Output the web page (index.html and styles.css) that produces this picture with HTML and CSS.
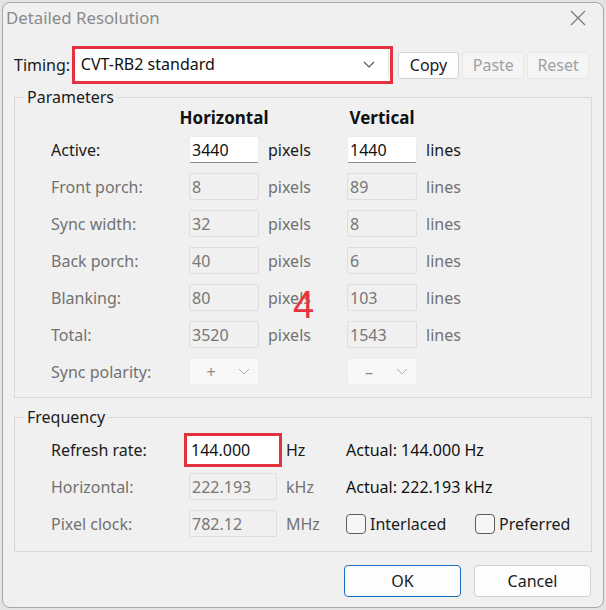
FILE: index.html
```html
<!DOCTYPE html>
<html lang="en">
<head>
  <meta charset="UTF-8">
  <title>Detailed Resolution</title>
  <link rel="stylesheet" href="styles.css">
</head>
<body>
  <div id="dialog">
    <div id="title-bar">
      <span id="title-text">Detailed Resolution</span>
      <svg id="close-btn" width="16" height="16" viewBox="0 0 16 16">
        <path d="M1 1L15 15M15 1L1 15" stroke="#7a7a7a" stroke-width="1.2" fill="none"/>
      </svg>
    </div>

    <div id="dialog-body">
      <div id="timing-row">
        <label class="row-label">Timing:</label>
        <div class="highlight timing-highlight">
          <div id="timing-combo">
            <span>CVT-RB2 standard</span>
            <svg class="chevron" width="12" height="7" viewBox="0 0 12 7">
              <path d="M1 1L6 6L11 1" stroke="#555" stroke-width="1.1" fill="none"/>
            </svg>
          </div>
        </div>
        <button class="push-btn">Copy</button>
        <button class="push-btn" disabled>Paste</button>
        <button class="push-btn" disabled>Reset</button>
      </div>

      <fieldset class="group-box">
        <legend>Parameters</legend>
        <div class="param-grid">
          <span></span><span class="col-head">Horizontal</span><span></span><span class="col-head">Vertical</span><span></span>

          <span class="field-label">Active:</span>
          <input class="text-box" value="3440">
          <span class="unit">pixels</span>
          <input class="text-box" value="1440">
          <span class="unit">lines</span>

          <span class="field-label off">Front porch:</span>
          <input class="text-box" value="8" disabled>
          <span class="unit off">pixels</span>
          <input class="text-box" value="89" disabled>
          <span class="unit off">lines</span>

          <span class="field-label off">Sync width:</span>
          <input class="text-box" value="32" disabled>
          <span class="unit off">pixels</span>
          <input class="text-box" value="8" disabled>
          <span class="unit off">lines</span>

          <span class="field-label off">Back porch:</span>
          <input class="text-box" value="40" disabled>
          <span class="unit off">pixels</span>
          <input class="text-box" value="6" disabled>
          <span class="unit off">lines</span>

          <span class="field-label off">Blanking:</span>
          <input class="text-box" value="80" disabled>
          <span class="unit off">pixels</span>
          <input class="text-box" value="103" disabled>
          <span class="unit off">lines</span>

          <span class="field-label off">Total:</span>
          <input class="text-box" value="3520" disabled>
          <span class="unit off">pixels</span>
          <input class="text-box" value="1543" disabled>
          <span class="unit off">lines</span>

          <span class="field-label off">Sync polarity:</span>
          <div class="mini-combo">
            <span class="sign">+</span>
            <svg class="chevron" width="12" height="7" viewBox="0 0 12 7">
              <path d="M1 1L6 6L11 1" stroke="#b0b0b0" stroke-width="1" fill="none"/>
            </svg>
          </div>
          <span></span>
          <div class="mini-combo">
            <span class="sign">&ndash;</span>
            <svg class="chevron" width="12" height="7" viewBox="0 0 12 7">
              <path d="M1 1L6 6L11 1" stroke="#b0b0b0" stroke-width="1" fill="none"/>
            </svg>
          </div>
          <span></span>
        </div>
        <span id="step-mark">4</span>
      </fieldset>

      <fieldset class="group-box freq-box">
        <legend>Frequency</legend>
        <div class="freq-grid">
          <span class="field-label">Refresh rate:</span>
          <div class="highlight rate-highlight">
            <input class="text-box wide" value="144.000">
          </div>
          <span class="unit">Hz</span>
          <span class="actual">Actual: 144.000 Hz</span>

          <span class="field-label off">Horizontal:</span>
          <input class="text-box wide" value="222.193" disabled>
          <span class="unit off">kHz</span>
          <span class="actual">Actual: 222.193 kHz</span>

          <span class="field-label off">Pixel clock:</span>
          <input class="text-box wide" value="782.12" disabled>
          <span class="unit off">MHz</span>
          <div class="check-row">
            <label class="check"><span class="check-box"></span>Interlaced</label>
            <label class="check"><span class="check-box"></span>Preferred</label>
          </div>
        </div>
      </fieldset>

      <div id="button-row">
        <button class="dlg-btn default-btn">OK</button>
        <button class="dlg-btn">Cancel</button>
      </div>
    </div>
  </div>
</body>
</html>
```

FILE: styles.css
```css
body {
  margin: 0;
  background-color: #e4e4e4;
  font-family: "Noto Sans", "Open Sans", sans-serif;
  font-size: 16px;
  color: #1b1b1b;
}

#dialog {
  position: relative;
  margin: 2px 0 0 2px;
  width: 600px;
  height: 604px;
  background-color: #f0f0f0;
  border: 1px solid #a8a8a8;
  border-radius: 8px;
  overflow: hidden;
}

#title-bar {
  height: 40px;
  display: flex;
  align-items: flex-start;
  justify-content: space-between;
  padding: 4px 17px 0 3px;
  box-sizing: border-box;
}

#title-text {
  font-size: 16.8px;
  line-height: 22px;
  color: #8a8a8a;
}

#close-btn {
  margin-top: 3px;
}

#dialog-body {
  padding: 4px 11px 0 11px;
}

#timing-row {
  display: flex;
  align-items: center;
  height: 36px;
}

.row-label {
  width: 58px;
}

.highlight {
  border: 3px solid #e5323f;
  background-color: #fff;
}

.timing-highlight {
  width: 314px;
  height: 30px;
  padding: 1px;
  margin-right: 5px;
}

#timing-combo {
  height: 28px;
  display: flex;
  align-items: center;
  justify-content: space-between;
  padding: 0 13px 0 5px;
  background-color: #fff;
  border-right: 1px solid #e6e6e6;
  color: #111;
}

.push-btn {
  width: 62px;
  height: 27px;
  margin-right: 3px;
  font-family: inherit;
  font-size: 16px;
  color: #1b1b1b;
  background-color: #fdfdfd;
  border: 1px solid #d4d4d4;
  border-radius: 3px;
  padding: 0;
}

.push-btn:disabled {
  color: #a0a0a0;
  background-color: #f5f5f5;
  border-color: #e8e8e8;
}

.group-box {
  position: relative;
  margin: 4px 0 0 0;
  padding: 0 0 7px 0;
  border: 1px solid #d8d8d8;
  border-radius: 0;
  min-width: 0;
}

.group-box legend {
  padding: 0 3px;
  margin-left: 9px;
  line-height: 20px;
  color: #1b1b1b;
}

.param-grid {
  display: grid;
  grid-template-columns: 138px 70px 88px 70px auto;
  grid-template-rows: 24px repeat(7, 37px);
  align-items: center;
  margin-left: 36px;
}

.col-head {
  align-self: start;
  justify-self: center;
  white-space: nowrap;
  font-weight: bold;
  font-size: 17px;
  line-height: 22px;
  color: #111;
}

.field-label {
  white-space: nowrap;
}

.off {
  color: #727272;
}

.unit {
  padding-left: 9px;
}

.text-box {
  box-sizing: border-box;
  width: 70px;
  height: 27px;
  padding: 0 0 0 2px;
  font-family: inherit;
  font-size: 16px;
  color: #111;
  background-color: #fff;
  border: 1px solid #ececec;
  border-bottom: 1px solid #8c8c8c;
  border-radius: 2px;
  outline: none;
}

.text-box:disabled {
  color: #777;
  background-color: #f0f0f0;
  border: 1px solid #dedede;
}

.text-box.wide {
  width: 88px;
}

.mini-combo {
  box-sizing: border-box;
  width: 70px;
  height: 27px;
  display: flex;
  align-items: center;
  justify-content: space-between;
  padding: 0 8px 0 14px;
  background-color: #f8f8f8;
  border: 1px solid #ededed;
  border-radius: 3px;
}

.sign {
  color: #8a8a8a;
  width: 14px;
  text-align: center;
}

#step-mark {
  position: absolute;
  left: 278px;
  top: 179px;
  font-family: "Liberation Sans", sans-serif;
  font-size: 38px;
  line-height: 1;
  color: #e8323e;
}

.freq-box {
  margin-top: 9px;
  padding-bottom: 9px;
}

.freq-grid {
  display: grid;
  grid-template-columns: 138px 88px 69px auto;
  grid-template-rows: 37px 37px 37px;
  align-items: center;
  margin: 4px 0 0 36px;
}

.rate-highlight {
  width: 92px;
  height: 28px;
  margin-left: -5px;
  padding: 0;
}

.rate-highlight .text-box {
  width: 92px;
  height: 28px;
  border: none;
  padding-left: 4px;
}

.actual {
  white-space: nowrap;
  color: #111;
}

.check-row {
  display: flex;
}

.check {
  display: flex;
  align-items: center;
  width: 129px;
  white-space: nowrap;
}

.check-box {
  box-sizing: border-box;
  width: 20px;
  height: 20px;
  margin-right: 4px;
  border: 1px solid #5c5c5c;
  border-radius: 4px;
  background-color: #f6f6f6;
}

#button-row {
  display: flex;
  justify-content: flex-end;
  gap: 13px;
  margin-top: 13px;
  padding-right: 1px;
}

.dlg-btn {
  width: 117px;
  height: 32px;
  font-family: inherit;
  font-size: 16px;
  color: #1b1b1b;
  background-color: #fdfdfd;
  border: 1px solid #d0d0d0;
  border-radius: 4px;
}

.default-btn {
  border-color: #1a6fc0;
}
```
